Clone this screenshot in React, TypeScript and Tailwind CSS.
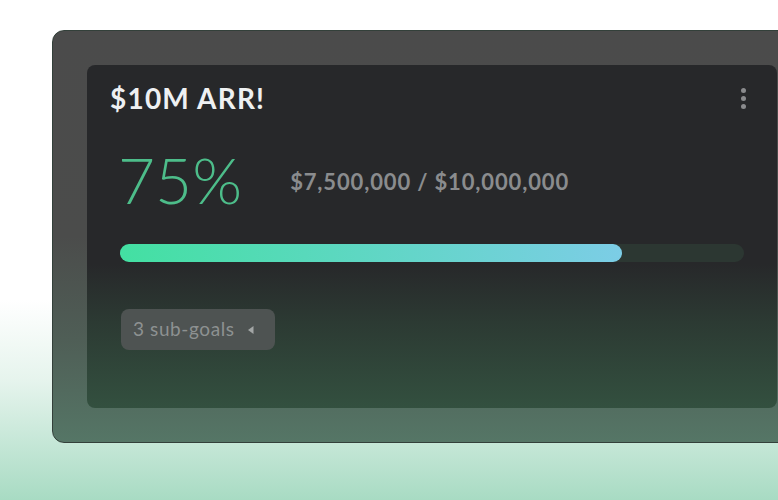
import React from "react";

export default function App() {
  return (
    <div
      className="relative w-[778px] h-[500px] overflow-hidden bg-[linear-gradient(to_bottom,#ffffff_0%,#ffffff_60%,#e6f4ed_76%,#a8dbc3_100%)]"
      style={{ fontFamily: "Lato, 'Open Sans', sans-serif" }}
    >
      <div className="pt-[30px] pl-[52px]">
        <div className="w-[760px] h-[413px] rounded-[12px] border border-[#33403a] bg-[linear-gradient(to_bottom,#4b4b4b_0%,#4b4c4b_50%,#4f5e56_75%,#557666_100%)] p-[34px] pb-[34px]">
          <div className="h-[343px] rounded-[8px] bg-[linear-gradient(to_bottom,#27282a_0%,#27282a_58%,#2c3a33_75%,#33503f_100%)] pt-[17px]">
            <div className="flex items-start justify-between pl-[23px] pr-[31px]">
              <h1 className="text-[28px] font-bold leading-[32px] text-[#eef0f2] tracking-[1.2px]">
                $10M ARR!
              </h1>
              <div className="flex flex-col gap-[3px] pt-[6px]">
                <span className="block w-[5px] h-[5px] rounded-full bg-[#8a8b8d]" />
                <span className="block w-[5px] h-[5px] rounded-full bg-[#8a8b8d]" />
                <span className="block w-[5px] h-[5px] rounded-full bg-[#8a8b8d]" />
              </div>
            </div>
            <div className="flex items-center pl-[31px] mt-[34px] h-[64px]">
              <span className="text-[64px] font-light leading-[64px] text-[#4dbd8a]">75%</span>
              <span className="ml-[48px] mt-[2px] text-[22px] font-bold tracking-[0.85px] text-[#8a8c8e]">
                $7,500,000 / $10,000,000
              </span>
            </div>
            <div className="mx-[33px] mt-[32px] h-[18px] rounded-full bg-[#2c3732]">
              <div className="h-full w-[80.5%] rounded-full bg-[linear-gradient(to_right,#43e0a2,#7ccde6)]" />
            </div>
            <div className="pl-[34px] mt-[47px]">
              <button className="flex items-center h-[41px] w-[154px] rounded-[8px] bg-[#4e5352] pl-[12px] text-[19px] tracking-[0.6px] text-[#8d9191]">
                <span>3 sub-goals</span>
                <svg width="6" height="8" viewBox="0 0 6 8" className="ml-[13px]">
                  <path d="M5.5 0 L0 4 L5.5 8 Z" fill="#a3a6a6" />
                </svg>
              </button>
            </div>
          </div>
        </div>
      </div>
    </div>
  );
}
